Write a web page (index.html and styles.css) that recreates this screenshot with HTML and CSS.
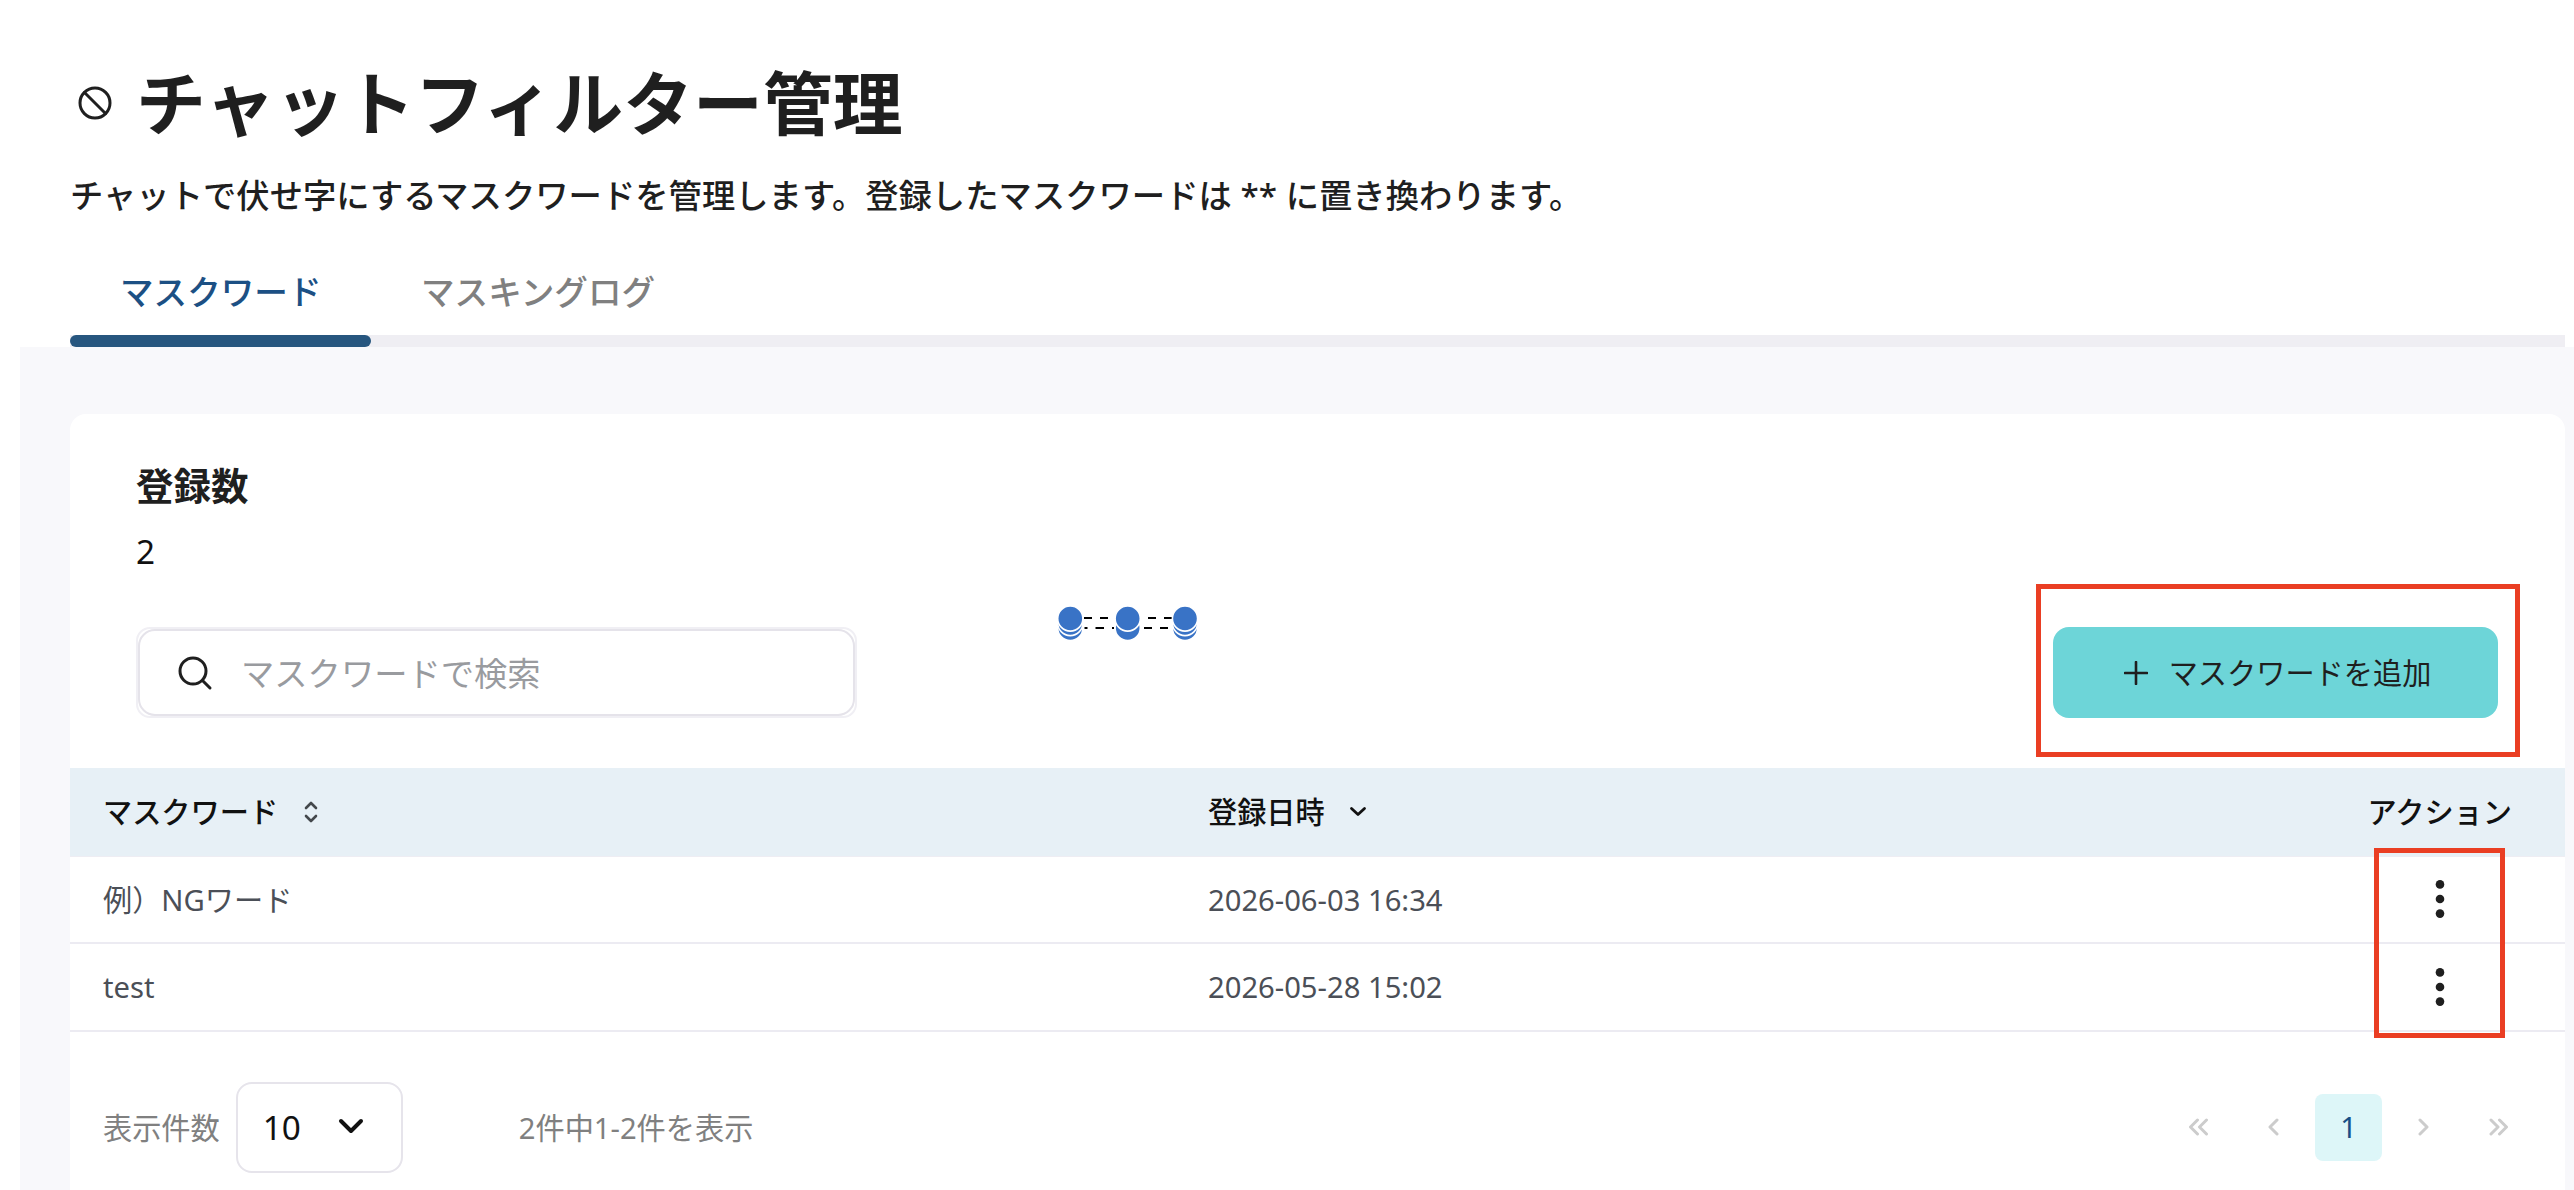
FILE: index.html
```html
<!DOCTYPE html>
<html lang="ja">
<head>
<meta charset="utf-8">
<title>チャットフィルター管理</title>
<link rel="stylesheet" href="styles.css">
</head>
<body>
<div class="page">
  <header class="header">
    <div class="title-row">
      <svg class="title-icon" viewBox="0 0 36 36"><circle cx="18" cy="18" r="15"/><path d="M7.5 7.5l21 21"/></svg>
      <h1 class="title">チャットフィルター管理</h1>
    </div>
    <p class="lead">チャットで伏せ字にするマスクワードを管理します。登録したマスクワードは ** に置き換わります。</p>
    <nav class="tabs">
      <a class="tab tab-active">マスクワード</a>
      <a class="tab">マスキングログ</a>
    </nav>
  </header>
  <main class="content">
    <section class="card">
      <div class="summary">
        <h2 class="summary-label">登録数</h2>
        <div class="summary-value">2</div>
        <div class="toolbar">
          <div class="search">
            <div class="search-inner">
              <svg class="search-icon" viewBox="0 0 36 36"><circle cx="16" cy="16" r="13"/><path d="M25.500 25.500l7.500 7.500"/></svg>
              <span class="placeholder">マスクワードで検索</span>
            </div>
          </div>
          <div class="add-wrap">
            <button class="add"><svg class="plus" viewBox="0 0 24 24"><path d="M12 1v22M1 12h22"/></svg><span class="add-label">マスクワードを追加</span></button>
            <span class="mark mark-add"></span>
          </div>
        </div>
        <svg class="handles" viewBox="0 0 132 40">
          <path class="dash" d="M28 12h8M44 12h8M92 12h8M108 12h8M28.500 22h3M39.500 22h8.500M56 22h2M88 22h8M104 22h8"/>
          <g class="knobs">
            <circle cx="14.300" cy="22" r="12.600"/><circle cx="14.300" cy="17" r="12.600"/><circle cx="14.300" cy="12.500" r="12.600"/>
            <circle cx="71.700" cy="22" r="12.600"/><circle cx="71.700" cy="12.500" r="12.600"/>
            <circle cx="129" cy="22" r="12.600"/><circle cx="129" cy="17" r="12.600"/><circle cx="129" cy="12.500" r="12.600"/>
          </g>
        </svg>
      </div>
      <div class="table">
        <div class="row head">
          <div class="cell"><span class="label">マスクワード</span><svg class="sort" viewBox="0 0 14 22"><path d="M2 7l5-5 5 5M2 15l5 5 5-5"/></svg></div>
          <div class="cell"><span class="label">登録日時</span><svg class="sort-down" viewBox="0 0 18 12"><path d="M2.500 2.500L9 8.500l6.500-6"/></svg></div>
          <div class="cell action"><span class="label">アクション</span></div>
        </div>
        <div class="row">
          <div class="cell"><span class="label">例）NGワード</span></div>
          <div class="cell date">2026-06-03 16:34</div>
          <div class="cell action"><svg class="more" viewBox="0 0 10 40"><circle cx="5" cy="5.400" r="4.300"/><circle cx="5" cy="20" r="4.300"/><circle cx="5" cy="34.600" r="4.300"/></svg></div>
        </div>
        <div class="row">
          <div class="cell">test</div>
          <div class="cell">2026-05-28 15:02</div>
          <div class="cell action"><svg class="more" viewBox="0 0 10 40"><circle cx="5" cy="5.400" r="4.300"/><circle cx="5" cy="20" r="4.300"/><circle cx="5" cy="34.600" r="4.300"/></svg></div>
        </div>
        <span class="mark mark-actions"></span>
      </div>
      <footer class="footer">
        <span class="muted">表示件数</span>
        <div class="select">10<svg class="select-icon" viewBox="0 0 26 18"><path d="M3 3l10 10L23 3"/></svg></div>
        <span class="muted range">2件中1-2件を表示</span>
        <div class="pager">
          <span class="page-btn"><svg viewBox="0 0 20 18"><path d="M8.500 2L1.500 9l7 7M17.500 2l-7 7 7 7"/></svg></span>
          <span class="page-btn"><svg viewBox="0 0 20 18"><path d="M13 2L6 9l7 7"/></svg></span>
          <span class="page-btn current">1</span>
          <span class="page-btn"><svg viewBox="0 0 20 18"><path d="M6 2l7 7-7 7"/></svg></span>
          <span class="page-btn"><svg viewBox="0 0 20 18"><path d="M2 2l7 7-7 7M10.500 2l7 7-7 7"/></svg></span>
        </div>
      </footer>
    </section>
  </main>
</div>
</body>
</html>
```
FILE: styles.css
```css
* { box-sizing: border-box; }
body {
  margin: 0;
  background: #fff;
  color: #1f1f1f;
  font-family: "Noto Sans", "Noto Sans CJK JP", sans-serif;
  font-size: 29.2px;
}
svg { fill: none; stroke: currentColor; stroke-linecap: round; stroke-linejoin: round; flex: none; }
.page { height: 1190px; padding-left: 20px; overflow: hidden; display: flex; flex-direction: column; }
.header { height: 347px; padding: 54px 9px 0 50px; display: flex; flex-direction: column; }
.title-row { height: 98px; display: flex; align-items: center; gap: 23px; padding-left: 7px; }
.title-icon { width: 36px; height: 36px; stroke-width: 3; }
.title { margin: 0; font-size: 69.9px; font-weight: 700; line-height: 98px; white-space: nowrap; }
.lead { margin: 18px 0 0; height: 50px; line-height: 50px; font-size: 33.35px; font-weight: 500; white-space: nowrap; }
.tabs { margin-top: auto; height: 104px; display: flex; border-bottom: 12px solid #efeef3; }
.tab { width: 301px; height: 104px; padding: 0 50px; line-height: 98px; font-size: 33.6px; font-weight: 500; color: #808080; white-space: nowrap; position: relative; }
.tab-active { color: #1c5084; }
.tab-active::after { content: ""; position: absolute; left: 0; right: 0; bottom: 0; height: 12px; border-radius: 6px; background: #27567f; }
.content { flex: 1; background: #f8f8fb; padding: 67px 9px 0 50px; }
.card { height: 100%; background: #fff; border-radius: 16px 16px 0 0; }
.summary { height: 354px; padding: 45px 67px 0 66px; position: relative; }
.summary-label { margin: 0; font-size: 37.5px; line-height: 54px; font-weight: 600; }
.summary-value { margin-top: 13px; font-size: 33.3px; line-height: 50px; color: #111; }
.toolbar { margin-top: 51px; display: flex; justify-content: space-between; align-items: center; }
.search { width: 721px; height: 91px; border: 2px solid #f0eff4; border-radius: 14px; }
.search-inner { height: 100%; border: 2px solid #e5e3ea; border-radius: 17px; display: flex; align-items: center; padding-left: 37px; gap: 28px; }
.search-icon { width: 36px; height: 36px; stroke-width: 3; }
.placeholder { font-size: 33.3px; color: #999b9f; padding-bottom: 3px; }
.add-wrap { position: relative; }
.add { width: 445px; height: 91px; border: 0; border-radius: 16px; background: #6dd5d8; color: #1f1f1f; font: inherit; display: flex; align-items: center; justify-content: center; gap: 21px; padding: 0 0 0 4px; }
.add-label { padding-bottom: 3px; }
.plus { width: 24px; height: 24px; stroke-width: 2.6; }
.mark { position: absolute; border: 5px solid #ea3e23; }
.mark-add { left: -17px; top: -43px; width: 484px; height: 173px; }
.handles { position: absolute; left: 986px; top: 192px; width: 132px; height: 40px; overflow: visible; }
.dash { stroke: #000; stroke-width: 2; stroke-linecap: butt; }
.knobs { fill: #3973c6; stroke: #fff; stroke-width: 1.6; }
.table { position: relative; color: #4b4f57; }
.row { display: grid; grid-template-columns: 1105px 1fr 190px; height: 87.7px; padding: 0 30px 0 33px; border-bottom: 2px solid #ecebf2; }
.cell { display: flex; align-items: center; white-space: nowrap; }
.label { padding-bottom: 2px; }
.date { padding-top: 1px; }
.head { height: 88.600px; background: #e7f0f6; color: #111; font-weight: 500; border-bottom: 1px solid #eeedf3; }
.action { justify-content: flex-end; padding-right: 23px; }
.row:not(.head) .action { padding-right: 90px; }
.more { width: 10px; height: 40px; fill: #1f1f1f; stroke: none; }
.sort { width: 14px; height: 22px; margin: 1px 0 0 26px; stroke-width: 2.6; color: #44484c; }
.sort-down { width: 18px; height: 12px; margin: 1px 0 0 24px; stroke-width: 2.8; }
.mark-actions { left: 2304px; top: 80px; width: 131px; height: 190px; }
.footer { margin-top: 50px; padding: 0 33px; height: 91px; display: flex; align-items: center; }
.muted { color: #808080; padding-bottom: 2px; }
.select { width: 167px; height: 91px; margin-left: 16px; border: 2px solid #e6e4eb; border-radius: 16px; display: flex; align-items: center; padding-left: 25px; font-size: 33.3px; color: #111; }
.select-icon { width: 26px; height: 18px; margin-left: 37px; stroke-width: 4; }
.range { margin-left: 116px; }
.pager { margin-left: auto; display: flex; gap: 8px; color: #ccc; }
.page-btn { width: 67px; height: 67px; border-radius: 8px; display: flex; align-items: center; justify-content: center; }
.page-btn svg { width: 20px; height: 18px; stroke-width: 3; }
.current { background: #ddf6f8; color: #174f86; }
```
